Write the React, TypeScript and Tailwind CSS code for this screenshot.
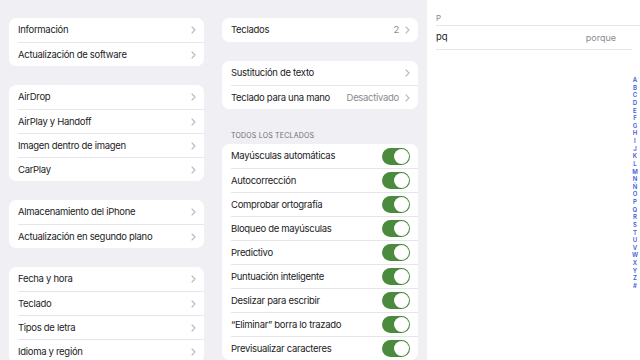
const font = { fontFamily: "Inter, 'Noto Sans', sans-serif" };

function Chevron() {
  return (
    <svg width="5" height="8" viewBox="0 0 5 8" className="shrink-0">
      <polyline points="1,1 4,4 1,7" fill="none" stroke="#b8b8bd" strokeWidth="1.1" strokeLinecap="round" strokeLinejoin="round" />
    </svg>
  );
}

function Toggle() {
  return (
    <div className="w-[28px] h-[17px] rounded-full bg-[#4b8b3d] flex items-center justify-end pr-[1px] shrink-0">
      <div className="w-[15px] h-[15px] rounded-full bg-white shadow-[0_0_0_0.5px_rgba(0,0,0,0.08)]" />
    </div>
  );
}

type Row = { label: string; value?: string; toggle?: boolean };

function Group({ rows }: { rows: Row[] }) {
  return (
    <div className="bg-white rounded-[7px] overflow-hidden shrink-0">
      {rows.map((r, i) => (
        <div key={r.label} className="flex h-[24px] pl-[9px]">
          <div
            className={
              "flex flex-1 items-center pr-[8px] " +
              (i > 0 ? "border-t border-[#e6e6ea]" : "")
            }
          >
            <span className="flex-1 text-[9.5px] tracking-[-0.3px] text-[#1c1c1e] whitespace-nowrap pt-[1px]">{r.label}</span>
            {r.value && (
              <span className="text-[9.5px] tracking-[-0.3px] text-[#8a8a8e] mr-[6px] whitespace-nowrap pt-[1px]">{r.value}</span>
            )}
            {r.toggle ? <Toggle /> : <Chevron />}
          </div>
        </div>
      ))}
    </div>
  );
}

const letters = "ABCDEFGHIJKLMNÑOPQRSTUVWXYZ#".split("");

export default function App() {
  return (
    <div className="w-[640px] h-[360px] overflow-hidden flex bg-[#efeff4]" style={font}>
      <div className="w-[213px] pl-[9px] pr-[9px] pt-[18px] flex flex-col gap-[19px] shrink-0">
        <Group rows={[{ label: "Información" }, { label: "Actualización de software" }]} />
        <Group
          rows={[
            { label: "AirDrop" },
            { label: "AirPlay y Handoff" },
            { label: "Imagen dentro de imagen" },
            { label: "CarPlay" },
          ]}
        />
        <Group rows={[{ label: "Almacenamiento del iPhone" }, { label: "Actualización en segundo plano" }]} />
        <Group
          rows={[
            { label: "Fecha y hora" },
            { label: "Teclado" },
            { label: "Tipos de letra" },
            { label: "Idioma y región" },
          ]}
        />
      </div>

      <div className="w-[214px] pl-[9px] pr-[9px] pt-[18px] flex flex-col shrink-0">
        <Group rows={[{ label: "Teclados", value: "2" }]} />
        <div className="h-[19px] shrink-0" />
        <Group rows={[{ label: "Sustitución de texto" }, { label: "Teclado para una mano", value: "Desactivado" }]} />
        <div className="pl-[9px] pt-[22px] pb-[4px] text-[7px] tracking-[0.2px] text-[#6d6d72] leading-[9px] shrink-0">
          TODOS LOS TECLADOS
        </div>
        <Group
          rows={[
            { label: "Mayúsculas automáticas", toggle: true },
            { label: "Autocorrección", toggle: true },
            { label: "Comprobar ortografía", toggle: true },
            { label: "Bloqueo de mayúsculas", toggle: true },
            { label: "Predictivo", toggle: true },
            { label: "Puntuación inteligente", toggle: true },
            { label: "Deslizar para escribir", toggle: true },
            { label: "“Eliminar” borra lo trazado", toggle: true },
            { label: "Previsualizar caracteres", toggle: true },
          ]}
        />
      </div>

      <div className="flex-1 bg-white relative pt-[10px]">
        <div className="pl-[9px]">
          <div className="h-[16px] flex items-center text-[8px] text-[#8a8a8e] border-b border-[#e6e6ea]">P</div>
          <div className="h-[24px] flex items-center border-b border-[#e6e6ea] mr-[8px] pr-[16px]">
            <span className="flex-1 text-[9.5px] text-[#1c1c1e]">pq</span>
            <span className="text-[9px] text-[#8a8a8e]">porque</span>
          </div>
        </div>
        <div className="absolute right-[2px] top-[76px] flex flex-col items-center">
          {letters.map((l) => (
            <span key={l} className="text-[6px] leading-[7.63px] font-semibold text-[#3b5bdb]">
              {l}
            </span>
          ))}
        </div>
      </div>
    </div>
  );
}
